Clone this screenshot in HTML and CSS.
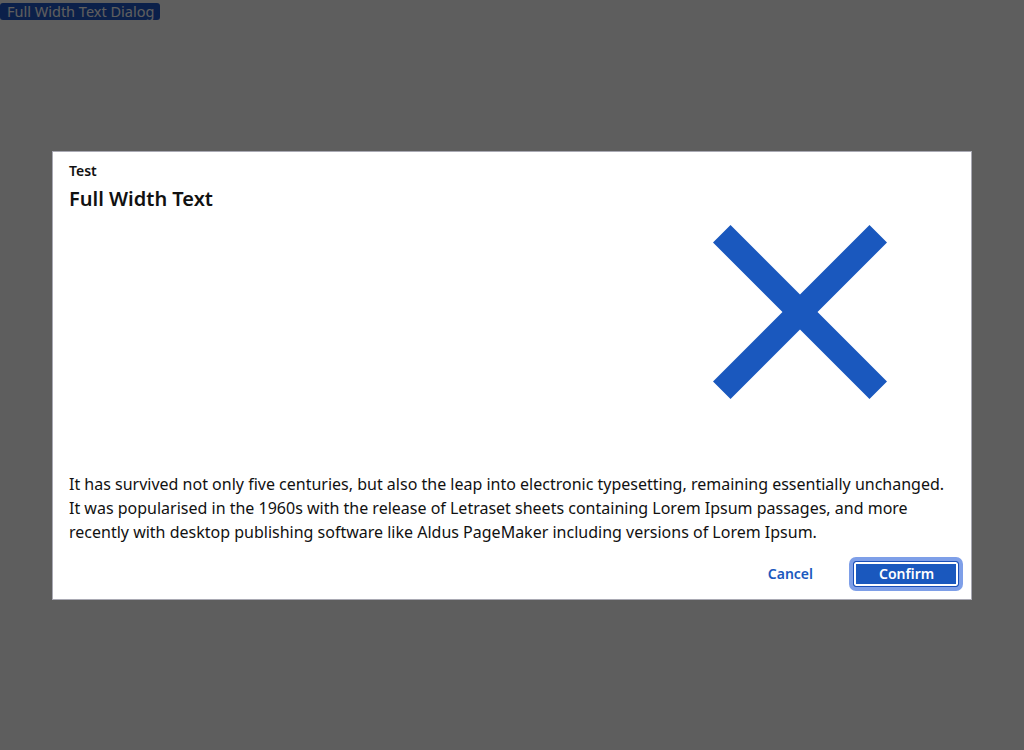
FILE: index.html
```html
<!DOCTYPE html>
<html lang="en">
<head>
<meta charset="utf-8">
<title>Full Width Text Dialog</title>
<link rel="stylesheet" href="styles.css">
</head>
<body>
<div class="page-label">Full Width Text Dialog</div>
<div class="overlay">
  <div class="dialog" role="dialog" aria-labelledby="dlg-title">
    <div class="dialog-header">
      <div class="dialog-kicker">Test</div>
      <h2 class="dialog-title" id="dlg-title">Full Width Text</h2>
    </div>
    <div class="dialog-media">
      <svg class="media-icon" viewBox="5 5 14 14" aria-hidden="true">
        <path d="M19 6.41L17.59 5 12 10.59 6.41 5 5 6.41 10.59 12 5 17.59 6.41 19 12 13.41 17.59 19 19 17.59 13.41 12z"/>
      </svg>
    </div>
    <p class="dialog-text">It has survived not only five centuries, but also the leap into electronic typesetting, remaining essentially unchanged. It was popularised in the 1960s with the release of Letraset sheets containing Lorem Ipsum passages, and more recently with desktop publishing software like Aldus PageMaker including versions of Lorem Ipsum.</p>
    <div class="dialog-footer">
      <button class="btn btn-ghost" type="button">Cancel</button>
      <button class="btn btn-primary" type="button">Confirm</button>
    </div>
  </div>
</div>
</body>
</html>
```

FILE: styles.css
```css
html, body {
  margin: 0;
  padding: 0;
  background: #ffffff;
  font-family: "Noto Sans", "Open Sans", sans-serif;
}

.page-label {
  display: inline-block;
  margin-top: 2px;
  padding: 0 6px 0 7px;
  height: 17px;
  line-height: 17px;
  font-size: 14.5px;
  color: #ffffff;
  background: #1f58c8;
  border-radius: 3px;
}

.overlay {
  position: fixed;
  inset: 0;
  background: rgba(0, 0, 0, 0.63);
  display: flex;
  align-items: center;
  justify-content: center;
}

.dialog {
  box-sizing: border-box;
  width: 920px;
  height: 449px;
  background: #ffffff;
  border: 1px solid #a9a9b3;
  display: flex;
  flex-direction: column;
  color: #111111;
}

.dialog-header {
  padding: 9px 16px 0 16px;
}

.dialog-kicker {
  font-size: 14px;
  line-height: 20px;
  font-weight: 600;
}

.dialog-title {
  margin: 4px 0 0 0;
  font-size: 20px;
  line-height: 28px;
  font-weight: 600;
}

.dialog-media {
  height: 259px;
  display: flex;
  justify-content: flex-end;
  align-items: flex-start;
  padding: 0 84px 0 16px;
}

.media-icon {
  width: 174px;
  height: 174px;
  margin-top: 12px;
  fill: #1a58be;
}

.dialog-text {
  margin: 0;
  padding: 0 16px;
  font-size: 16px;
  line-height: 24px;
}

.dialog-footer {
  display: flex;
  justify-content: flex-end;
  align-items: center;
  gap: 14px;
  padding: 17px 12px 0 16px;
}

.btn {
  box-sizing: border-box;
  height: 26px;
  padding: 0 25px;
  font-family: "Noto Sans", "Open Sans", sans-serif;
  font-size: 14px;
  font-weight: 600;
  line-height: 22px;
  border-radius: 3px;
  cursor: pointer;
}

.btn-ghost {
  background: transparent;
  border: 1px solid transparent;
  color: #1a58be;
}

.btn-primary {
  width: 106px;
  background: #1a58be;
  color: #ffffff;
  border: 1px solid #1a4fb8;
  box-shadow: inset 0 0 0 2px #ffffff, 0 0 0 4px #7e9fe8;
  border-radius: 3px;
}
```
